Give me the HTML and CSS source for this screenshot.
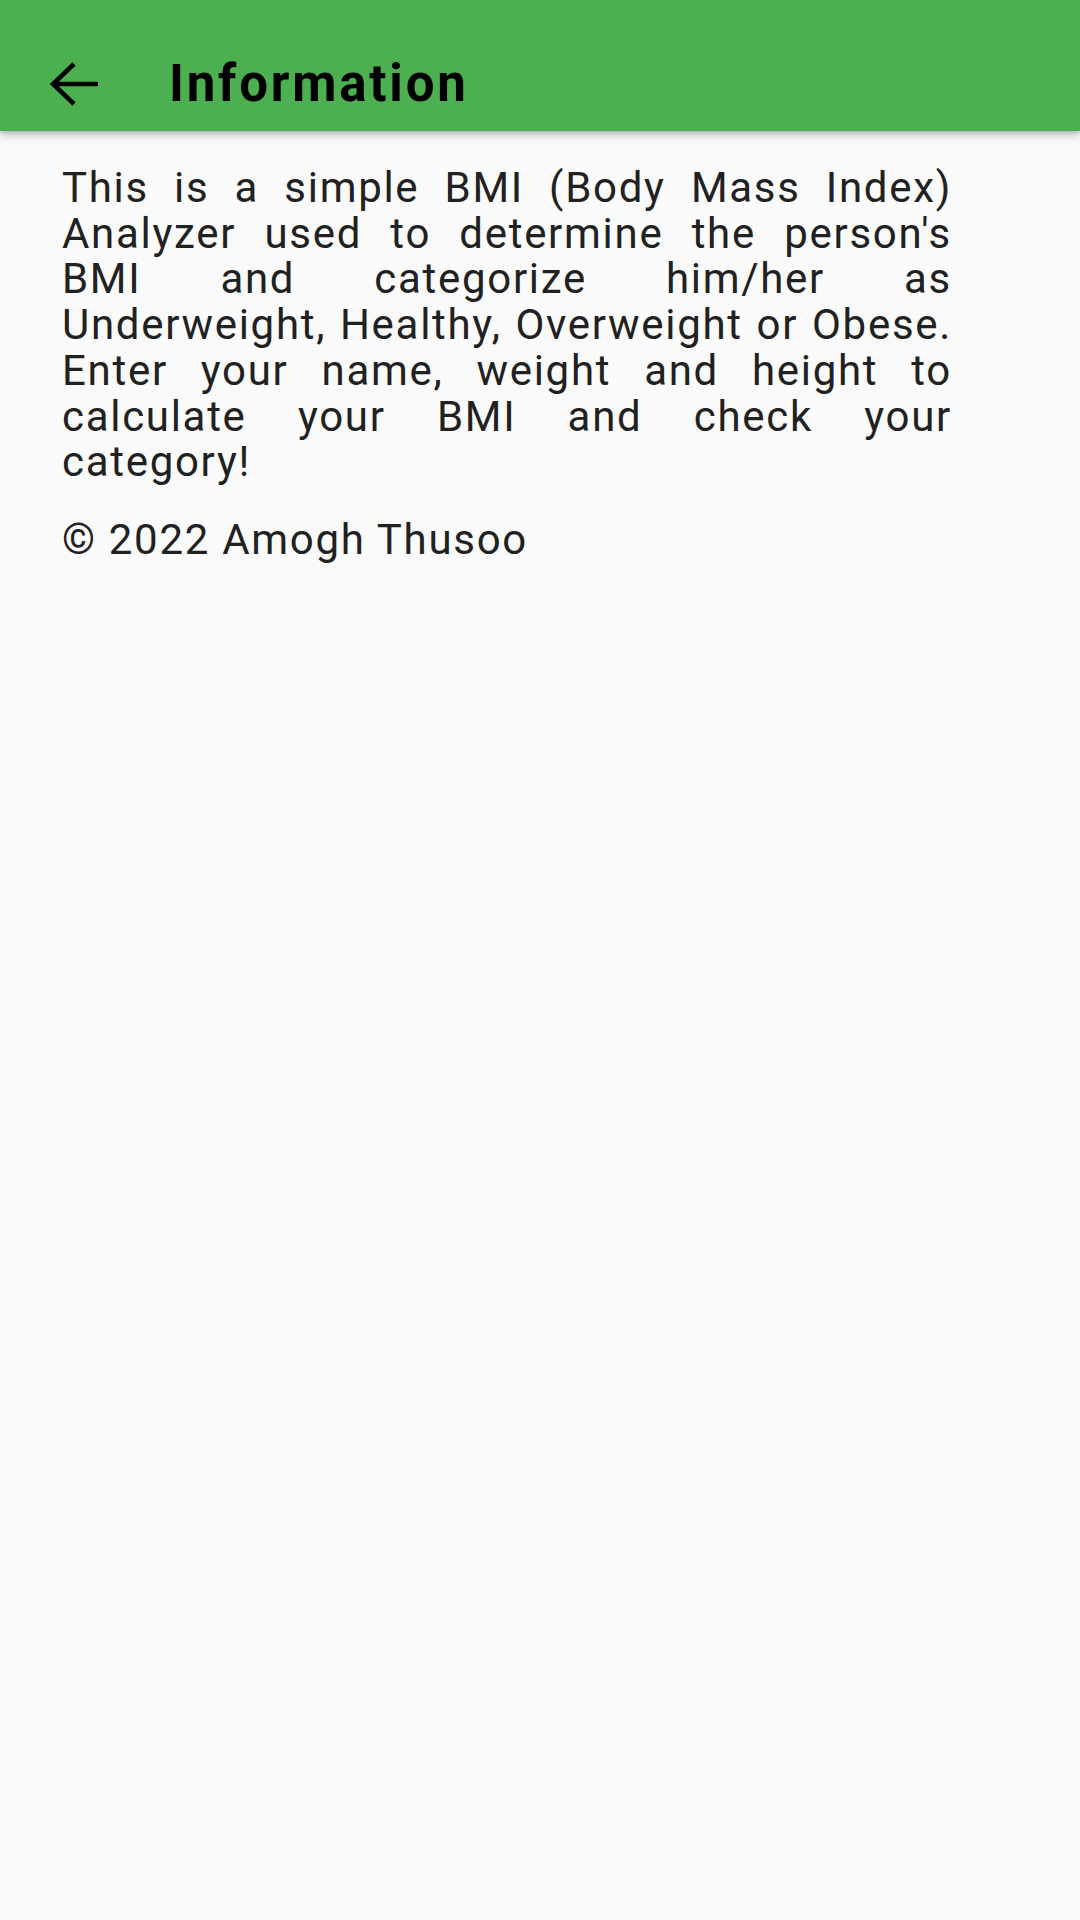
FILE: index.html
```html
<!DOCTYPE html>
<html>
<head>
<meta charset="utf-8">
<link rel="stylesheet" href="styles.css">
</head>
<body>
<header class="appbar">
  <button class="back" aria-label="Back">
    <svg width="50" height="44" viewBox="0 0 50 44"><path d="M3 22H48M24 2L3 22L24 42" fill="none" stroke="#000" stroke-width="4.5" stroke-linecap="butt" stroke-linejoin="miter"/></svg>
  </button>
  <h1 class="title">Information</h1>
</header>
<main class="content">
  <p class="desc">This is a simple BMI (Body Mass Index) Analyzer used to determine the person's BMI and categorize him/her as Underweight, Healthy, Overweight or Obese. Enter your name, weight and height to calculate your BMI and check your category!</p>
  <p class="copy">© 2022 Amogh Thusoo</p>
</main>
</body>
</html>
```
FILE: styles.css
```css
html, body {
  margin: 0;
  padding: 0;
  background: #fafafa;
  width: 1080px;
  height: 1920px;
  overflow: hidden;
}
body {
  font-family: Roboto, "Noto Sans", sans-serif;
}
.appbar {
  box-sizing: border-box;
  height: 131px;
  padding-top: 36px;
  background: #4caf50;
  display: flex;
  align-items: center;
  box-shadow: 0 4px 10px rgba(0,0,0,0.22), 0 2px 4px rgba(0,0,0,0.12);
  position: relative;
  z-index: 1;
}
.back {
  background: none;
  border: none;
  padding: 0;
  margin-left: 50px;
  width: 50px;
  height: 44px;
  display: flex;
}
.title {
  margin: 0 0 0 69px;
  font-size: 51px;
  font-weight: 700;
  color: #000;
  letter-spacing: 2.8px;
}
.content {
  padding: 34px 128px 0 62px;
}
.desc {
  margin: 0;
  font-size: 42px;
  line-height: 45.7px;
  text-align: justify;
  color: #212121;
  letter-spacing: 1.7px;
}
.copy {
  margin: 32px 0 0;
  font-size: 42px;
  line-height: 45.7px;
  color: #212121;
  letter-spacing: 1.7px;
}
```
